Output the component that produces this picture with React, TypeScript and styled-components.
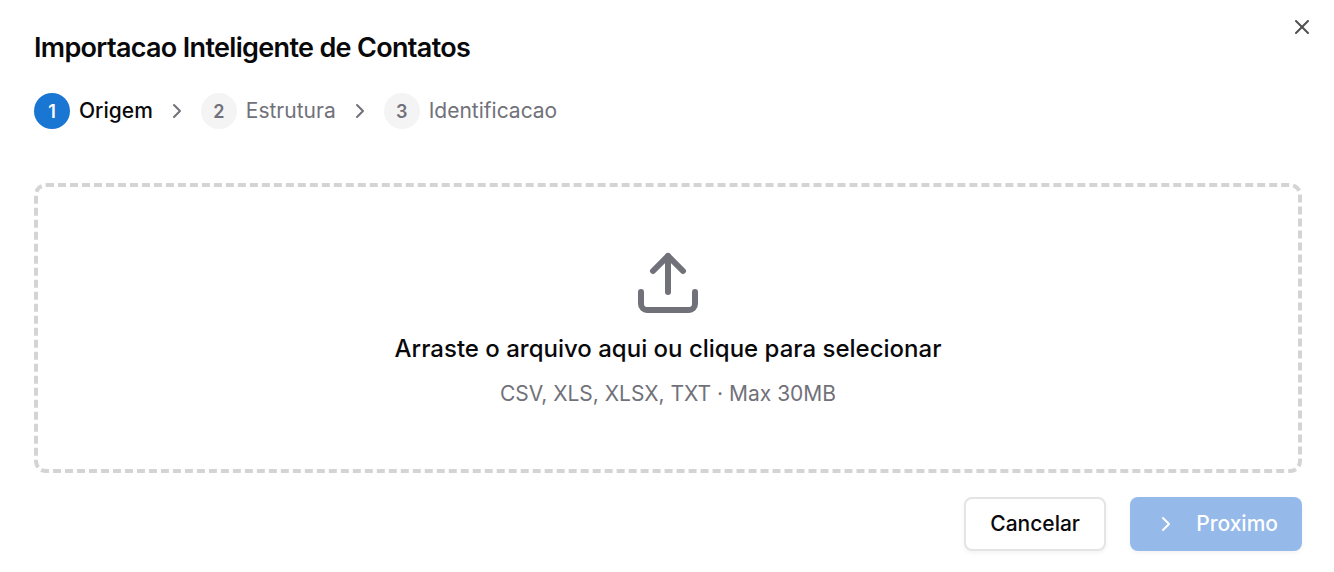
import React from 'react';
import styled, { createGlobalStyle } from 'styled-components';
import { ChevronRight, Upload, X } from 'lucide-react';

const GlobalStyle = createGlobalStyle`
  * {
    box-sizing: border-box;
  }

  body {
    margin: 0;
    background: #fff;
    color: #09090b;
    font-family: Inter, 'Liberation Sans', sans-serif;
    -webkit-font-smoothing: antialiased;
  }
`;

const Dialog = styled.div`
  position: relative;
  width: 1334px;
  height: 572px;
  padding: 34px 32px 21px 34px;
  display: flex;
  flex-direction: column;
`;

const CloseButton = styled.button`
  position: absolute;
  top: 15px;
  right: 20px;
  display: flex;
  padding: 0;
  border: none;
  background: none;
  color: #09090b;
  opacity: 0.7;
`;

const Title = styled.h2`
  margin: 0;
  font-size: 27px;
  font-weight: 600;
  line-height: 27px;
  letter-spacing: -0.675px;
`;

const Steps = styled.div`
  display: flex;
  align-items: center;
  gap: 12px;
  margin-top: 32px;
  color: #71717a;
`;

const Step = styled.div`
  display: flex;
  align-items: center;
  gap: 9px;
`;

const StepNumber = styled.span<{ $active?: boolean }>`
  display: flex;
  align-items: center;
  justify-content: center;
  width: 36px;
  height: 36px;
  border-radius: 50%;
  background: ${({ $active }) => ($active ? '#1976d2' : '#f4f4f4')};
  color: ${({ $active }) => ($active ? '#fff' : '#71717a')};
  font-size: 18px;
  font-weight: 600;
`;

const StepLabel = styled.span<{ $active?: boolean }>`
  color: ${({ $active }) => ($active ? '#09090b' : '#71717a')};
  font-size: 21px;
  font-weight: ${({ $active }) => ($active ? 500 : 400)};
  line-height: 30px;
`;

const DropZone = styled.div`
  display: flex;
  flex-direction: column;
  align-items: center;
  height: 290px;
  margin-top: 54px;
  padding-top: 60px;
  border: 4px dashed #d4d4d4;
  border-radius: 12px;
  color: #71717a;
`;

const DropTitle = styled.p`
  margin: 12px 0 0;
  color: #09090b;
  font-size: 24px;
  font-weight: 500;
  line-height: 36px;
`;

const DropHint = styled.p`
  margin: 12px 0 0;
  font-size: 21px;
  line-height: 30px;
`;

const Footer = styled.div`
  display: flex;
  justify-content: flex-end;
  gap: 24px;
  margin-top: 24px;
`;

const Button = styled.button<{ $primary?: boolean }>`
  display: flex;
  align-items: center;
  justify-content: flex-end;
  gap: 18px;
  width: ${({ $primary }) => ($primary ? '172px' : '142px')};
  height: 54px;
  padding: 0 24px;
  border: ${({ $primary }) => ($primary ? 'none' : '2px solid #e4e4e4')};
  border-radius: 8px;
  background: ${({ $primary }) => ($primary ? '#95b9e9' : '#fff')};
  color: ${({ $primary }) => ($primary ? '#fff' : '#09090b')};
  box-shadow: 0 2px 4px rgba(0, 0, 0, 0.05);
  font-family: inherit;
  font-size: 21px;
  font-weight: 500;
  line-height: 30px;
  white-space: nowrap;
`;

const ButtonLabel = styled.span`
  padding-bottom: 1px;
`;

const steps = ['Origem', 'Estrutura', 'Identificacao'];

const App: React.FC = () => {
  return (
    <>
      <GlobalStyle />
      <Dialog>
        <Title>Importacao Inteligente de Contatos</Title>
        <CloseButton aria-label="Fechar">
          <X size={24} />
        </CloseButton>

        <Steps>
          {steps.map((label, i) => (
            <React.Fragment key={label}>
              {i > 0 && <ChevronRight size={24} />}
              <Step>
                <StepNumber $active={i === 0}>{i + 1}</StepNumber>
                <StepLabel $active={i === 0}>{label}</StepLabel>
              </Step>
            </React.Fragment>
          ))}
        </Steps>

        <DropZone>
          <Upload size={72} />
          <DropTitle>Arraste o arquivo aqui ou clique para selecionar</DropTitle>
          <DropHint>CSV, XLS, XLSX, TXT · Max 30MB</DropHint>
        </DropZone>

        <Footer>
          <Button>
            <ButtonLabel>Cancelar</ButtonLabel>
          </Button>
          <Button $primary disabled>
            <ChevronRight size={24} />
            <ButtonLabel>Proximo</ButtonLabel>
          </Button>
        </Footer>
      </Dialog>
    </>
  );
};

export default App;
